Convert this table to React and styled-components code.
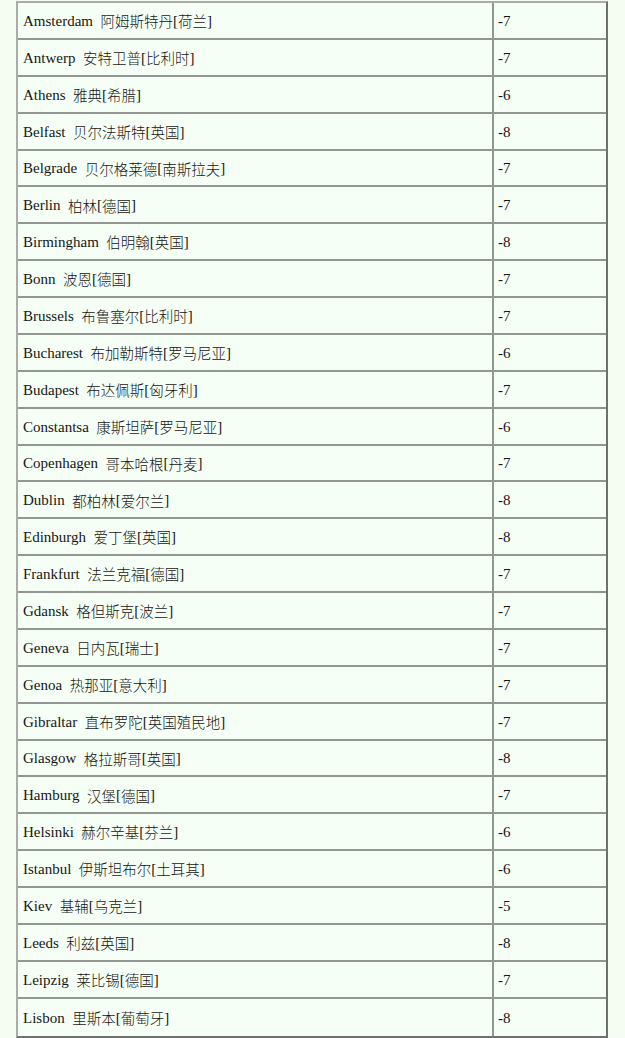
import React from "react";
import styled, { createGlobalStyle } from "styled-components";

const Global = createGlobalStyle`
  html, body {
    margin: 0;
    padding: 0;
    background: #f5fdf3;
  }
  body {
    font-family: "Liberation Serif", "Noto Sans CJK SC", serif;
    color: #161616;
  }
`;

const Page = styled.div`
  padding: 1px 0 0 16px;
`;

const Table = styled.div`
  width: 592px;
  box-sizing: border-box;
  border-top: 2px solid #a9aca8;
  border-left: 2px solid #a9aca8;
  border-right: 2px solid #6f716e;
  border-bottom: 2px solid #6f716e;
  background: #f6fff5;
`;

const Row = styled.div`
  display: grid;
  grid-template-columns: 476px 1fr;
  height: 36.88px;
  box-sizing: border-box;
  border-bottom: ${(p) => (p.$last ? "0" : "2px solid #949693")};
`;

const Cell = styled.div`
  display: flex;
  align-items: center;
  box-sizing: border-box;
  padding: 2px 0 0 ${(p) => (p.$value ? "4px" : "5px")};
  border-right: ${(p) => (p.$value ? "0" : "2px solid #949693")};
  font-size: 15px;
  white-space: pre;
  line-height: 1;
`;

const Cn = styled.span`
  font-family: "Noto Sans CJK SC", "Liberation Serif", sans-serif;
  font-weight: 300;
  font-size: 14.5px;
`;

const Br = styled.span`
  font-family: "Liberation Serif", serif;
`;

const rows = [
  ["Amsterdam", "阿姆斯特丹", "荷兰", "-7"],
  ["Antwerp", "安特卫普", "比利时", "-7"],
  ["Athens", "雅典", "希腊", "-6"],
  ["Belfast", "贝尔法斯特", "英国", "-8"],
  ["Belgrade", "贝尔格莱德", "南斯拉夫", "-7"],
  ["Berlin", "柏林", "德国", "-7"],
  ["Birmingham", "伯明翰", "英国", "-8"],
  ["Bonn", "波恩", "德国", "-7"],
  ["Brussels", "布鲁塞尔", "比利时", "-7"],
  ["Bucharest", "布加勒斯特", "罗马尼亚", "-6"],
  ["Budapest", "布达佩斯", "匈牙利", "-7"],
  ["Constantsa", "康斯坦萨", "罗马尼亚", "-6"],
  ["Copenhagen", "哥本哈根", "丹麦", "-7"],
  ["Dublin", "都柏林", "爱尔兰", "-8"],
  ["Edinburgh", "爱丁堡", "英国", "-8"],
  ["Frankfurt", "法兰克福", "德国", "-7"],
  ["Gdansk", "格但斯克", "波兰", "-7"],
  ["Geneva", "日内瓦", "瑞士", "-7"],
  ["Genoa", "热那亚", "意大利", "-7"],
  ["Gibraltar", "直布罗陀", "英国殖民地", "-7"],
  ["Glasgow", "格拉斯哥", "英国", "-8"],
  ["Hamburg", "汉堡", "德国", "-7"],
  ["Helsinki", "赫尔辛基", "芬兰", "-6"],
  ["Istanbul", "伊斯坦布尔", "土耳其", "-6"],
  ["Kiev", "基辅", "乌克兰", "-5"],
  ["Leeds", "利兹", "英国", "-8"],
  ["Leipzig", "莱比锡", "德国", "-7"],
  ["Lisbon", "里斯本", "葡萄牙", "-8"],
];

export default function App() {
  return (
    <Page>
      <Global />
      <Table>
        {rows.map(([en, city, country, diff], i) => (
          <Row key={en} $last={i === rows.length - 1}>
            <Cell>
              {en}
              {"\u00a0 "}
              <Cn>{city}</Cn>
              <Br>[</Br>
              <Cn>{country}</Cn>
              <Br>]</Br>
            </Cell>
            <Cell $value>{diff}</Cell>
          </Row>
        ))}
      </Table>
    </Page>
  );
}
